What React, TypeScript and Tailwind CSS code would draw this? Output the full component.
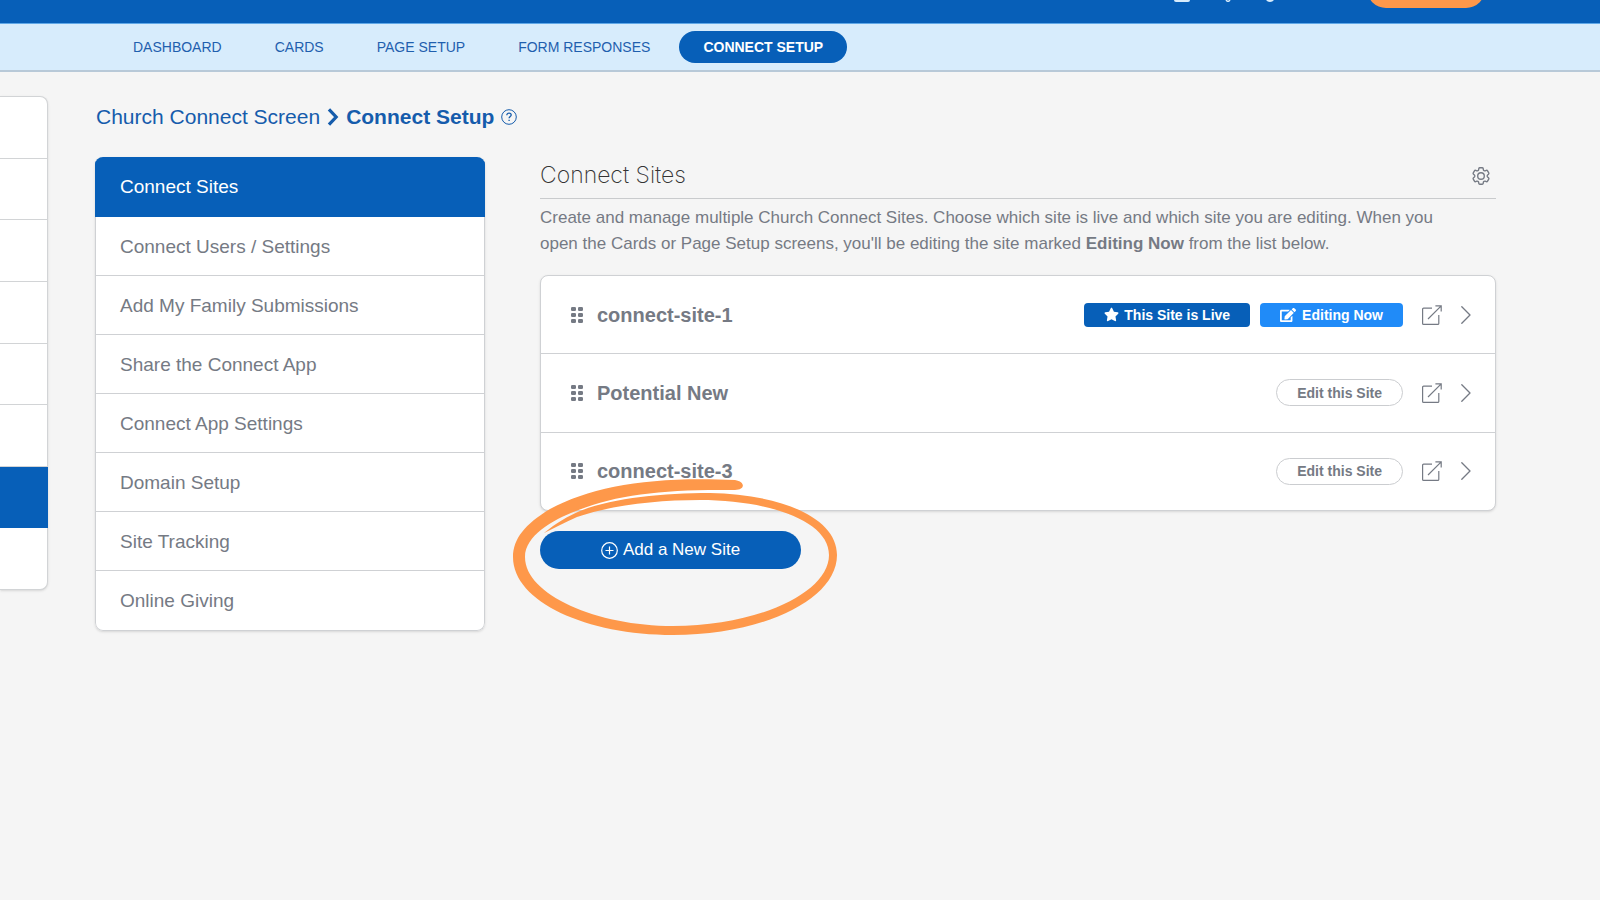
import { clsx } from "clsx";
import { FaEdit, FaStar } from "react-icons/fa";

const navItems = ["Dashboard", "Cards", "Page Setup", "Form Responses", "Connect Setup"];

const menuItems = [
  "Connect Sites",
  "Connect Users / Settings",
  "Add My Family Submissions",
  "Share the Connect App",
  "Connect App Settings",
  "Domain Setup",
  "Site Tracking",
  "Online Giving",
];

const sites = [
  { name: "connect-site-1", live: true },
  { name: "Potential New", live: false },
  { name: "connect-site-3", live: false },
];

const railItems = [0, 1, 2, 3, 4, 5, 6, 7];
const activeRailItem = 6;

const GripIcon = () => (
  <svg width="12" height="16" viewBox="0 0 12 16" fill="currentColor" aria-hidden="true">
    {[0, 6, 12].map((y) => (
      <g key={y}>
        <rect x="0" y={y} width="5" height="4" rx="1.3" />
        <rect x="7" y={y} width="5" height="4" rx="1.3" />
      </g>
    ))}
  </svg>
);

const ExternalIcon = () => (
  <svg width="20" height="20" viewBox="0 0 20 20" fill="none" stroke="currentColor" strokeWidth="1.2" aria-hidden="true">
    <path d="M10 3.2H1.6a1 1 0 0 0-1 1v14.2a1 1 0 0 0 1 1h14.2a1 1 0 0 0 1-1V10" />
    <path d="M6 14 19.2.8M13.4.8h5.8v5.8" />
  </svg>
);

const ChevronIcon = () => (
  <svg width="10" height="18" viewBox="0 0 10 18" fill="none" stroke="currentColor" strokeWidth="1.3" aria-hidden="true">
    <path d="M.8.8 9 9 .8 17.2" strokeLinecap="round" strokeLinejoin="round" />
  </svg>
);

const GearIcon = () => (
  <svg width="22" height="22" viewBox="0 0 24 24" fill="none" stroke="currentColor" strokeWidth="1.5" strokeLinejoin="round" aria-hidden="true">
    <path d="M9.594 3.94c.09-.542.56-.94 1.110-.94h2.593c.55 0 1.020.398 1.110.94l.213 1.281c.063.374.313.686.645.870.074.040.147.083.220.127.325.196.720.257 1.075.124l1.217-.456a1.125 1.125 0 0 1 1.370.490l1.296 2.247a1.125 1.125 0 0 1-.260 1.431l-1.003.827c-.293.241-.438.613-.430.992a7.723 7.723 0 0 1 0 .255c-.008.378.137.750.430.991l1.004.827c.424.350.534.955.260 1.430l-1.298 2.247a1.125 1.125 0 0 1-1.369.491l-1.217-.456c-.355-.133-.750-.072-1.076.124a6.470 6.470 0 0 1-.220.128c-.331.183-.581.495-.644.869l-.213 1.281c-.090.543-.560.940-1.110.940h-2.594c-.550 0-1.019-.398-1.110-.940l-.213-1.281c-.062-.374-.312-.686-.644-.870a6.520 6.520 0 0 1-.220-.127c-.325-.196-.720-.257-1.076-.124l-1.217.456a1.125 1.125 0 0 1-1.369-.490l-1.297-2.247a1.125 1.125 0 0 1 .260-1.431l1.004-.827c.292-.240.437-.613.430-.991a6.932 6.932 0 0 1 0-.255c.007-.380-.138-.751-.430-.992l-1.004-.827a1.125 1.125 0 0 1-.260-1.430l1.297-2.247a1.125 1.125 0 0 1 1.370-.491l1.216.456c.356.133.751.072 1.076-.124.072-.044.146-.086.220-.128.332-.183.582-.495.644-.869l.214-1.280Z" />
    <circle cx="12" cy="12" r="3.600" />
  </svg>
);

// Hand-drawn marker ring that calls out the button below the list
const MarkerRing = () => (
  <svg
    className="pointer-events-none absolute -left-7 -top-[53px] max-w-none"
    width="328"
    height="160"
    viewBox="0 0 328 160"
    fill="#fe984a"
    aria-hidden="true"
  >
    <path
      d="M32 55C44 45 56 38 68 33C100 20 150 15 198 15
        C265 16 325 38 325 77C325 122 250 157 161 157
        C75 157 1 124 1 79C1 61 13 46 38 31C80 8 140-2 223 2
        C234 4 233 12 223 12C155 11 105 16 64 33
        C40 42 13 58 13 79C13 117 85 148 161 148
        C245 148 317 115 317 77C317 42 255 22 188 22
        C145 22 100 27 65 39C53 44 43 50 32 55Z"
    />
  </svg>
);

const TopBar = () => (
  <header className="flex h-6 items-end justify-end overflow-hidden border-b border-[#5fa8e8] bg-[#075fb8] pb-[15px] pr-[115px]">
    <button aria-label="Calendar" className="mb-[6px] shrink-0 text-[#d7ecfc]">
      <svg width="16" height="18" viewBox="0 0 16 18" fill="currentColor">
        <rect width="16" height="18" rx="2" />
      </svg>
    </button>
    <button aria-label="Location" className="mb-[6px] ml-[30px] shrink-0 text-[#d7ecfc]">
      <svg width="16" height="18" viewBox="0 0 16 18" fill="none" stroke="currentColor" strokeWidth="1.5">
        <circle cx="8" cy="6" r="5" />
        <circle cx="8" cy="15.500" r="1.800" />
      </svg>
    </button>
    <button aria-label="Notifications" className="mb-[6px] ml-[26px] shrink-0 text-[#d7ecfc]">
      <svg width="16" height="18" viewBox="0 0 16 18" fill="currentColor">
        <path d="M2 13c2-2 1-5 2-8a4 4 0 0 1 8 0c1 3 0 6 2 8zM3 14h10c-1 2.500-2.500 4-5 4s-4-1.500-5-4z" />
      </svg>
    </button>
    <button aria-label="Account" className="ml-[89px] h-[38px] w-[118px] shrink-0 rounded-full bg-[#fe984a]" />
  </header>
);

const Nav = () => (
  <nav className="flex h-12 items-center gap-[5px] border-b-2 border-[#b8c9d8] bg-[#d7ecfc] pl-[109px]">
    {navItems.map((item) => (
      <a
        key={item}
        href="#"
        className={clsx(
          "rounded-full px-6 text-sm leading-8 uppercase",
          item === "Connect Setup" ? "bg-[#075fb8] font-bold text-white" : "text-[#1f5fae]",
        )}
      >
        {item}
      </a>
    ))}
  </nav>
);

const SiteRow = ({ name, live }: { name: string; live: boolean }) => (
  <li className="flex flex-1 items-center border-b border-[#cfd1d4] pl-[30px] pr-6 text-[#757a84] last:border-b-0">
    <GripIcon />
    <h3 className="ml-[14px] flex-1 text-xl font-bold">{name}</h3>
    {live ? (
      <div className="flex gap-[10px] text-sm font-bold text-white">
        <span className="flex h-6 items-center gap-[5px] rounded-[4px] bg-[#075fb8] px-5">
          <FaStar size={15} />
          This Site is Live
        </span>
        <span className="flex h-6 items-center gap-[6px] rounded-[4px] bg-[#208bf8] px-5">
          <FaEdit size={16} />
          Editing Now
        </span>
      </div>
    ) : (
      <button className="h-[27px] rounded-full border border-[#cbcdd0] px-5 text-sm font-bold">Edit this Site</button>
    )}
    <a href="#" aria-label={`Open ${name}`} className="ml-[19px]">
      <ExternalIcon />
    </a>
    <a href="#" aria-label={`Settings for ${name}`} className="ml-[19px]">
      <ChevronIcon />
    </a>
  </li>
);

const App = () => {
  return (
    <div className="min-h-screen bg-[#f5f5f5] font-['Liberation_Sans',Arial,sans-serif]">
      <TopBar />
      <Nav />

      <div className="flex items-start pt-6">
        <aside className="flex h-[494px] w-12 shrink-0 flex-col rounded-r-lg border border-l-0 border-[#d2d4d6] bg-white shadow-sm">
          {railItems.map((item) => (
            <div
              key={item}
              className={clsx(
                "flex-1 border-b last:border-b-0",
                item === activeRailItem ? "-mr-px border-[#075fb8] bg-[#075fb8]" : "border-[#d2d4d6]",
              )}
            />
          ))}
        </aside>

        <main className="ml-[47px] mr-[104px] min-w-0 flex-1">
          <h1 className="flex h-[42px] items-center pl-px text-[21px] text-[#155cac]">
            <a href="#">Church Connect Screen</a>
            <svg width="12" height="18" viewBox="0 0 12 20" className="mx-[7px]" fill="none" stroke="currentColor" strokeWidth="3.6" aria-hidden="true">
              <path d="M1.500 1.500 9.500 10l-8 8.500" />
            </svg>
            <strong>Connect Setup</strong>
            <button aria-label="Help" className="ml-[7px]">
              <svg width="16" height="16" viewBox="0 0 16 16" fill="none" stroke="currentColor" aria-hidden="true">
                <circle cx="8" cy="8" r="7.300" />
                <path strokeWidth="1.300" d="M5.800 6.300c0-1.300 1-2.100 2.200-2.100s2.200.8 2.200 1.900c0 1.400-2.100 1.500-2.100 3.200M8.100 10.700v1.300" />
              </svg>
            </button>
          </h1>

          <div className="mt-[19px] flex items-start gap-[55px]">
            <nav className="w-[390px] shrink-0 overflow-hidden rounded-lg shadow-sm">
              {menuItems.map((item, index) => (
                <a
                  key={item}
                  href="#"
                  className={clsx(
                    "flex h-[59px] items-center border-x border-b px-6 pt-0.5 text-[19px] first:h-[60px] last:h-[60px] last:rounded-b-lg",
                    index === 0
                      ? "border-[#075fb8] bg-[#075fb8] text-white"
                      : "border-[#cfd1d4] bg-white text-[#757a84]",
                  )}
                >
                  {item}
                </a>
              ))}
            </nav>

            <section className="min-w-0 flex-1">
              <div className="flex h-[42px] items-center justify-between border-b border-[#c9cbcd] pb-1 pr-1">
                <h2 className="font-['Inter',sans-serif] text-[23px] font-extralight text-[#333]">Connect Sites</h2>
                <button aria-label="Site options" className="text-[#757a84]">
                  <GearIcon />
                </button>
              </div>
              <p className="mt-[6px] pr-6 text-[17px] leading-[26px] text-[#757a84]">
                Create and manage multiple Church Connect Sites. Choose which site is live and which site you are
                editing. When you open the Cards or Page Setup screens, you'll be editing the site marked{" "}
                <strong>Editing Now</strong> from the list below.
              </p>

              <ul className="mt-[18px] flex h-[236px] flex-col rounded-lg border border-[#cfd1d4] bg-white shadow-sm">
                {sites.map((site) => (
                  <SiteRow key={site.name} name={site.name} live={site.live} />
                ))}
              </ul>

              <div className="relative mt-5 w-[261px]">
                <button className="flex h-[38px] w-full items-center justify-center gap-[5px] rounded-full bg-[#075fb8] text-[17px] text-white">
                  <svg width="17" height="17" viewBox="0 0 17 17" fill="none" stroke="currentColor" strokeWidth="1.200" aria-hidden="true">
                    <circle cx="8.500" cy="8.500" r="7.800" />
                    <path d="M8.500 4.500v8M4.500 8.500h8" />
                  </svg>
                  Add a New Site
                </button>
                <MarkerRing />
              </div>
            </section>
          </div>
        </main>
      </div>
    </div>
  );
};

export default App;
